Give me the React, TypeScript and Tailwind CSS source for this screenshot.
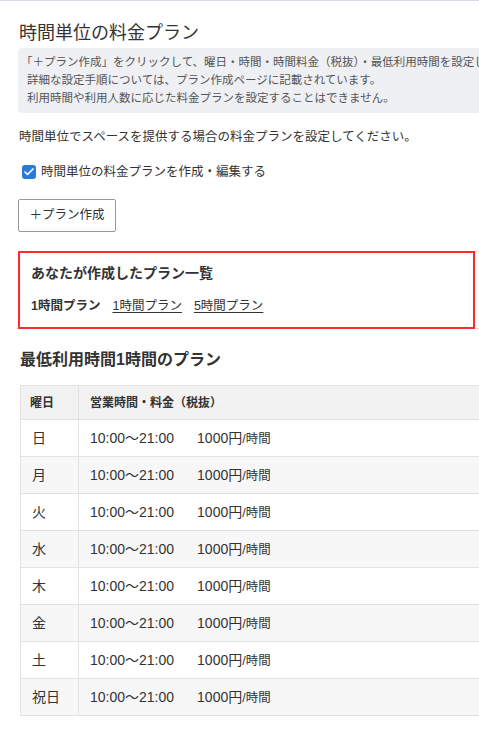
import { Check } from "lucide-react"

const FONT = { fontFamily: '"Liberation Sans", "Noto Sans CJK JP", sans-serif' }

const days = ["日", "月", "火", "水", "木", "金", "土", "祝日"]

export default function App() {
  return (
    <div className="w-[479px] h-[751px] overflow-hidden bg-white text-[#333] border-t border-[#d8dee8]" style={FONT}>
      <div className="pl-[18px]">
        {/* TITLE */}
        <h1 className="mt-[18px] text-[18px] leading-[28px] pl-px">時間単位の料金プラン</h1>

        {/* NOTE BOX */}
        <div className="mt-px w-[480px] rounded-l bg-[#eef0f4] pl-[9px] pt-[5px] pb-[6px] text-[11.5px] leading-[18px] text-[#555] whitespace-nowrap">
          <p className="-ml-[6px]">「＋プラン作成」をクリックして、曜日・時間・時間料金（税抜）・最低利用時間を設定してください。</p>
          <p>詳細な設定手順については、プラン作成ページに記載されています。</p>
          <p>利用時間や利用人数に応じた料金プランを設定することはできません。</p>
        </div>

        <p className="mt-[14px] pl-px text-[12.5px] leading-[20px]">
          時間単位でスペースを提供する場合の料金プランを設定してください。
        </p>

        <label className="mt-[15px] flex items-center gap-[5px] pl-[4px] h-[20px] text-[12.5px]">
          <span className="w-[14px] h-[14px] rounded-[3px] bg-[#2b7bd6] flex items-center justify-center">
            <Check className="w-[12px] h-[12px] text-white" strokeWidth={3.5} />
          </span>
          時間単位の料金プランを作成・編集する
        </label>

        <button className="mt-[17px] h-[33px] w-[98px] border border-[#999] rounded-[2px] bg-white text-[12.5px] text-[#333] flex items-center justify-center">
          ＋プラン作成
        </button>

        {/* PLAN LIST */}
        <div className="mt-[19px] w-[480px] border-y border-[#e3e3e3]">
          <div className="-my-px w-[457px] border-2 border-[#ff2b2b] pl-[11px] pt-[10px] pb-[11px]">
            <h3 className="text-[14px] leading-[20px] font-bold">あなたが作成したプラン一覧</h3>
            <div className="mt-[13px] flex items-center gap-3 text-[12.5px] leading-[20px]">
              <span className="font-bold">1時間プラン</span>
              <a className="underline underline-offset-2">1時間プラン</a>
              <a className="underline underline-offset-2">5時間プラン</a>
            </div>
          </div>
        </div>

        <h2 className="mt-[19px] pl-[2px] text-[16px] leading-[24px] font-bold">最低利用時間1時間のプラン</h2>

        {/* TABLE */}
        <table className="mt-[13px] ml-[2px] w-[500px] border-collapse text-left">
          <thead>
            <tr className="h-[34px] bg-[#f2f2f2]">
              <th className="w-[58px] border border-[#e2e2e2] pl-[9px] text-[12px] font-bold">曜日</th>
              <th className="border border-[#e2e2e2] pl-[11px] text-[12px] font-bold">営業時間・料金（税抜）</th>
            </tr>
          </thead>
          <tbody>
            {days.map((d, i) => (
              <tr key={d} className={i % 2 === 1 ? "h-[37px] bg-[#f7f7f7]" : "h-[37px] bg-white"}>
                <td className="border border-[#e2e2e2] pl-[11px] text-[14px]">{d}</td>
                <td className="border border-[#e2e2e2] pl-[11px] text-[14px] whitespace-nowrap">
                  10:00〜21:00
                  <span className="ml-[23px]">1000円</span>
                  <span className="text-[12.5px]">/時間</span>
                </td>
              </tr>
            ))}
          </tbody>
        </table>
      </div>
    </div>
  )
}
